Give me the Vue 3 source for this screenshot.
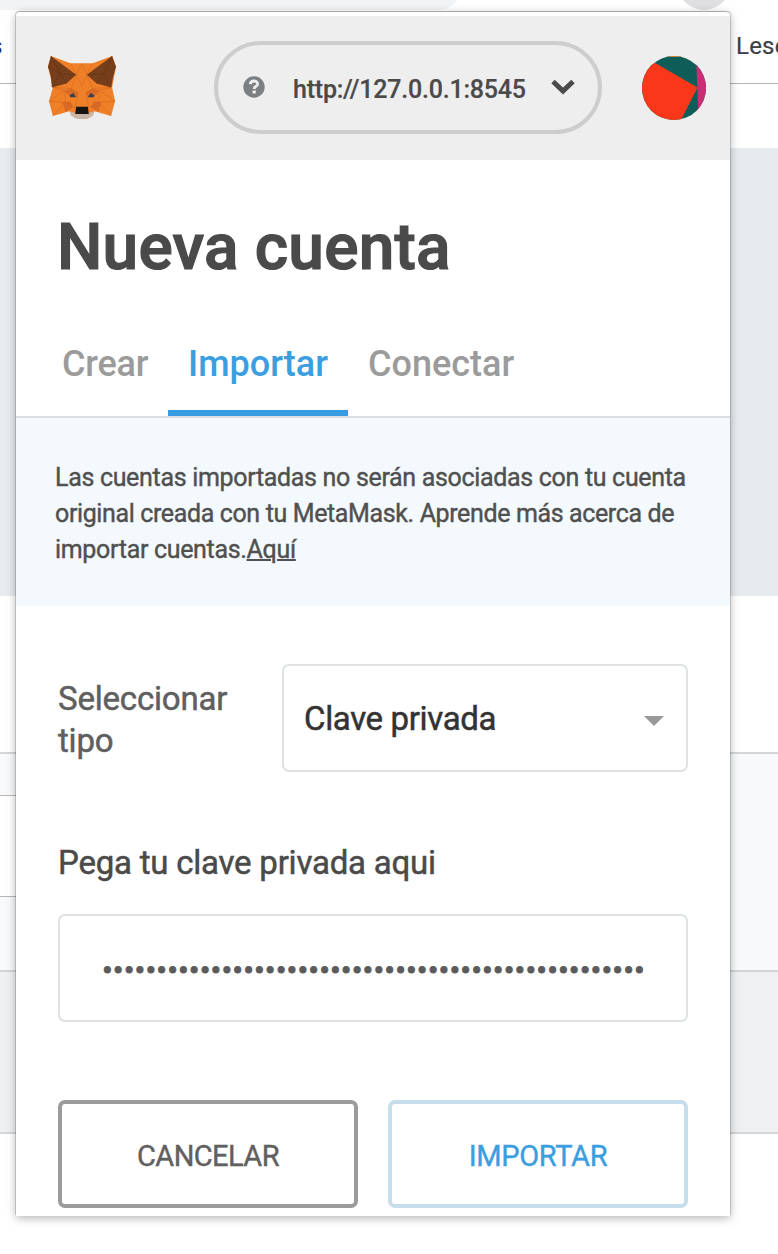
<script setup>
const tabs = [
  { label: 'Crear', cls: 'crear' },
  { label: 'Importar', cls: 'importar active' },
  { label: 'Conectar', cls: 'conectar' },
]
const dots = '•'.repeat(50)
</script>

<template>
  <div class="screen">
    <div class="page">
      <div class="chrome"><div class="omnibox"></div><div class="avatar"></div></div>
      <div class="bookmarks"><span class="bm-left">s</span><span class="bm-right">Lese</span></div>
      <div class="gap"></div>
      <div class="hero"></div>
      <div class="blank"></div>
      <div class="section"><div class="box"></div></div>
      <div class="footer"></div>
    </div>

    <div class="popup">
      <header class="bar">
        <svg class="fox" width="68" height="65" viewBox="0 0 70 66" preserveAspectRatio="none">
          <path fill="#f08028" d="M3 1 23 8.500H46L66 1 70 12 66 33 69 47 65 62 48 57 42 64H28L22 57 5 62 1 47 5 33 0 12Z" />
          <path fill="#d96a25" d="M17 36 24 34 31 38 29 43 20 40ZM53 36 46 34 39 38 41 43 50 40ZM15 48 23 47 26 53 18 58ZM55 48 47 47 44 53 52 58Z" />
          <path fill="#763e1a" d="M3 1 29 20 19 29 4 33 3 22 0 12ZM66 1 40 20 50 29 65 33 67 22 70 12Z" />
          <path fill="none" stroke="#c4601f" stroke-width=".8" opacity=".55" d="M23 8.500 29 20 35 31 40 20 46 8.500M29 20 35 9 40 20M29 20 24 34 5 33M40 20 46 34 65 33M24 34 31 39 28 54M46 34 39 39 42 54M5 33 17 36 1 47 18 48 5 62M65 33 53 36 69 47 52 48 65 62M17 36 18 48 28 54M53 36 52 48 42 54" />
          <path fill="none" stroke="#5a2c10" stroke-width=".7" opacity=".5" d="M3 1 13 19 0 12M66 1 57 19 70 12M4 32 13 19 19 29M65 32 57 19 50 29M13 19 29 20M57 19 40 20" />
          <path fill="#c9b5a5" d="M22 57 29 59H41L48 57 46 62 40 65H30L24 62Z" />
          <path fill="#3b4050" d="M22 41 26 38.500 29 43 23 43ZM48 41 44 38.500 41 43 47 43Z" />
          <path fill="#171411" d="M29 52.500H41L42 60H28Z" />
        </svg>
        <div class="network">
          <svg class="help" width="22" height="22" viewBox="0 0 22 22">
            <circle cx="11" cy="11" r="10.700" fill="#7d8082" />
            <path d="M7.300 8.200C7.700 3.700 15.300 4.100 14.500 8.500C14 10.500 11.200 10.300 11.200 13" fill="none" stroke="#eee" stroke-width="2.900" />
            <rect x="9.600" y="14.500" width="3.200" height="3" fill="#eee" />
          </svg>
          <span class="url">http://127.0.0.1:8545</span>
          <svg class="chev" width="24" height="16" viewBox="0 0 24 16">
            <path d="M2 2.500 12 12 22 2.500" fill="none" stroke="#4a4a4a" stroke-width="5" />
          </svg>
        </div>
        <svg class="identicon" width="64" height="64" viewBox="0 0 64 64">
          <defs><clipPath id="disc"><circle cx="32" cy="32" r="32" /></clipPath></defs>
          <g clip-path="url(#disc)">
            <rect width="64" height="64" fill="#0e5d58" />
            <path fill="#c72f74" d="M54 0H64V64H56.500Z" />
            <path fill="#fb3719" d="M-10-6.500 55.500 31.500 36 70H-10Z" />
            <path fill="#d58a2c" d="M27 0H40V.9H27Z" />
          </g>
        </svg>
      </header>

      <h1 class="title"><span>Nueva cuenta</span></h1>
      <nav class="tabs">
        <div v-for="t in tabs" :key="t.label" class="tab" :class="t.cls"><span>{{ t.label }}</span></div>
      </nav>

      <p class="notice">
        <span>Las cuentas importadas no serán asociadas con tu cuenta</span><br>
        <span class="mid">original creada con tu MetaMask. Aprende más acerca de</span><br>
        <span>importar cuentas.<u>Aquí</u></span>
      </p>

      <div class="type-row">
        <label class="type-label">Seleccionar<br>tipo</label>
        <div class="select">
          <span>Clave privada</span>
          <svg width="20" height="10" viewBox="0 0 20 10"><path d="M0 0H20L10 10Z" fill="#999" /></svg>
        </div>
      </div>

      <label class="key-label"><span>Pega tu clave privada aqui</span></label>
      <div class="key-input"><span>{{ dots }}</span></div>

      <div class="actions">
        <button class="btn cancel"><span>CANCELAR</span></button>
        <button class="btn import"><span>IMPORTAR</span></button>
      </div>
    </div>
  </div>
</template>

<style>
body { margin: 0; }
</style>

<style scoped>
* { box-sizing: border-box; }
.screen { position: relative; width: 778px; height: 1254px; overflow: hidden; background: #fff; font-family: Roboto, sans-serif; color: #4a4a4a; }
.page { display: flex; flex-direction: column; }
.chrome { height: 10px; display: flex; align-items: flex-end; flex: none; }
.omnibox { width: 462px; height: 40px; background: #f1f3f4; border-radius: 0 0 24px 0; }
.avatar { width: 52px; height: 52px; margin-left: 216px; border-radius: 50%; background: #dfdfe1; }
.bookmarks { height: 74px; display: flex; justify-content: space-between; border-bottom: 1px solid #b4b4b4; font: 24px/28px Roboto, sans-serif; padding-top: 22px; color: #3c4043; white-space: nowrap; -webkit-text-stroke: .2px; }
.bm-left { margin-left: -10px; color: #1f2c55; }
.bm-right { width: 42px; letter-spacing: .2px; }
.gap { height: 64px; }
.hero { height: 448px; background: #e7ebee; }
.blank { height: 156px; }
.section { height: 218px; background: #f8f9fb; border-top: 2px solid #d4d6d8; padding-top: 41px; }
.box { width: 100px; height: 102px; border: 1px solid #b5b7b8; background: #fff; margin-left: -20px; }
.footer { height: 164px; background: #eff0f2; border-top: 2px solid #d2d4d6; border-bottom: 2px solid #d4d6d8; }

.popup { position: absolute; left: 16px; top: 12px; width: 714px; height: 1204px; padding-top: 4px; background: #fff; border-radius: 4px 4px 0 0; box-shadow: -1px -1px 0 0 rgba(0, 0, 0, .15), 1px -1px 0 0 rgba(0, 0, 0, .15), 0 2px 10px rgba(0, 0, 0, .3); }
.bar { height: 144px; background: #eee; display: flex; align-items: center; padding: 0 24px 0 32px; }
.fox { margin-top: -1px; }
.network { width: 388px; height: 93px; margin-left: 98px; border: 4px solid #cdcdcd; border-radius: 47px; display: flex; align-items: center; padding-left: 25px; margin-top: -2px; }
.url { width: 233px; margin-left: 28px; margin-top: 5px; font-size: 25px; font-weight: 500; letter-spacing: -.22px; white-space: nowrap; -webkit-text-stroke: .2px; }
.chev { margin-left: 25px; }
.identicon { margin-left: 40px; }

.title { margin: 0; padding: 50px 0 0 41px; height: 150px; font-size: 64px; line-height: 75px; font-weight: 500; letter-spacing: .2px; white-space: nowrap; -webkit-text-stroke: 1.2px; }
.tabs { height: 108px; display: flex; padding-left: 26px; border-bottom: 2px solid #dadfe3; }
.tab { height: 106px; padding: 33px 0 0 20px; font-size: 36px; line-height: 42px; color: #9b9b9b; font-weight: 500; white-space: nowrap; }
.crear { width: 126px; letter-spacing: -.2px; }
.importar { width: 180px; }
.active { color: #3b9ee0; border-bottom: 6px solid #369de0; }

.notice { margin: 0; height: 188px; padding: 42px 0 0 39px; background: #f3f9fc; font-size: 25px; line-height: 36px; letter-spacing: -.32px; white-space: nowrap; color: #505050; -webkit-text-stroke: .4px; }
.notice .mid { letter-spacing: -.37px; }
.notice u { text-decoration-thickness: 2px; }

.type-row { display: flex; padding: 58px 42px 0; height: 167px; justify-content: space-between; }
.type-label { font-size: 33px; line-height: 42px; padding-top: 14px; color: #5f5f5f; letter-spacing: -.2px; -webkit-text-stroke: .5px; }
.select { width: 406px; height: 108px; border: 2px solid #dee2e5; border-radius: 7px; display: flex; align-items: center; justify-content: space-between; padding: 0 22px 0 20px; font-size: 33px; letter-spacing: -.35px; color: #333; -webkit-text-stroke: .5px; }
.select svg { margin-top: 5px; }
.key-label { display: block; height: 141px; padding: 70px 0 0 42px; font-size: 33px; line-height: 40px; letter-spacing: -.22px; white-space: nowrap; -webkit-text-stroke: .5px; }
.key-input { width: 630px; height: 108px; margin-left: 42px; border: 2px solid #dee2e5; border-radius: 7px; padding: 34px 0 0 42px; font-size: 32px; line-height: 40px; letter-spacing: .06px; white-space: nowrap; color: #5b5b5b; -webkit-text-stroke: .8px; }

.actions { display: flex; gap: 30px; padding: 78px 42px 0; }
.btn { width: 300px; height: 108px; border: 4px solid #9b9b9b; border-radius: 7px; background: #fff; font: 29px Roboto, sans-serif; color: #606060; padding: 3px 0 0; letter-spacing: -.55px; -webkit-text-stroke: .4px; }
.import { border-color: #c7ddec; color: #3b9ee0; letter-spacing: -.35px; }
</style>
